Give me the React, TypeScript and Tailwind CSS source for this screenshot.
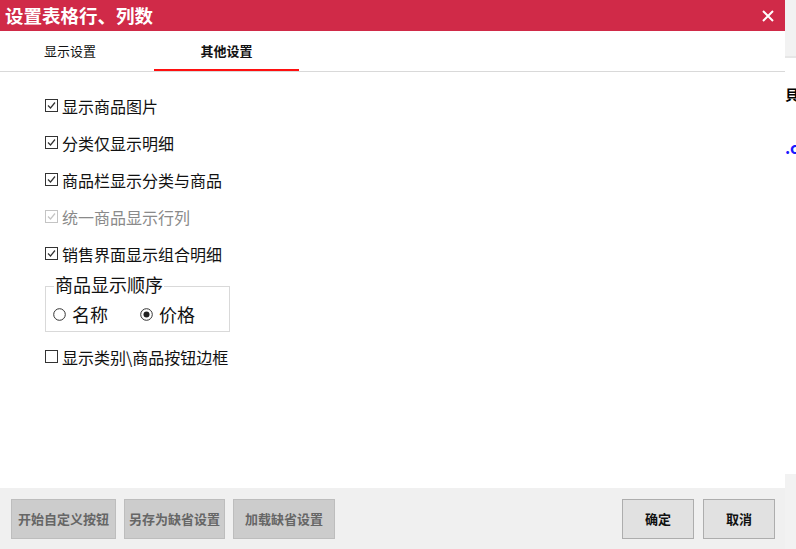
import React from "react"

const font = { fontFamily: '"Noto Sans CJK SC", "Noto Sans", sans-serif' }

const checks = [
  { label: "显示商品图片", checked: true },
  { label: "分类仅显示明细", checked: true },
  { label: "商品栏显示分类与商品", checked: true },
  { label: "统一商品显示行列", checked: true, disabled: true },
  { label: "销售界面显示组合明细", checked: true },
]

function Box({ checked, disabled }: { checked: boolean; disabled?: boolean }) {
  const c = disabled ? "#c4c4c4" : "#333333"
  return (
    <svg width="13" height="13" viewBox="0 0 13 13" className="shrink-0">
      <rect x="0.5" y="0.5" width="12" height="12" fill="white" stroke={c} />
      {checked && <path d="M3 6.5 L5.5 9 L10 3.5" fill="none" stroke={c} strokeWidth="1.2" />}
    </svg>
  )
}

function CheckRow({ label, checked, disabled }: { label: string; checked: boolean; disabled?: boolean }) {
  return (
    <div className="flex h-[37px] items-center gap-[4px]">
      <Box checked={checked} disabled={disabled} />
      <span className={`text-[16px] leading-none ${disabled ? "text-[#8a8a8a]" : "text-[#111]"}`}>{label}</span>
    </div>
  )
}

function Radio({ label, on }: { label: string; on?: boolean }) {
  return (
    <div className="flex items-center gap-[6px]">
      <svg width="13" height="13" viewBox="0 0 13 13">
        <circle cx="6.5" cy="6.5" r="5.8" fill="white" stroke="#333" />
        {on && <circle cx="6.5" cy="6.5" r="3" fill="#222" />}
      </svg>
      <span className="text-[18px] leading-none text-[#111]">{label}</span>
    </div>
  )
}

function Btn({ children, primary, w }: { children: React.ReactNode; primary?: boolean; w?: string }) {
  return primary ? (
    <button className="flex h-[40px] w-[72px] items-center justify-center border border-[#adadad] bg-[#e1e1e1] text-[13px] font-bold text-[#111]">
      {children}
    </button>
  ) : (
    <button className={`flex h-[40px] items-center justify-center border border-[#bdbdbd] bg-[#cccccc] text-[13px] font-bold text-[#666] ${w}`}>
      {children}
    </button>
  )
}

export default function App() {
  return (
    <div className="flex h-[549px] w-[796px] overflow-hidden bg-white" style={font}>
      <div className="flex h-full w-[785px] flex-col">
        <div className="flex h-[31px] items-center justify-between bg-[#d02a48] pl-[5px] pr-[10px]">
          <span className="text-[18.5px] font-bold text-white">设置表格行、列数</span>
          <svg width="14" height="14" viewBox="0 0 14 14">
            <path d="M2 2 L12 12 M12 2 L2 12" stroke="white" strokeWidth="2" />
          </svg>
        </div>
        <div className="flex h-[41px] border-b border-[#d9d9d9]">
          <div className="flex w-[140px] items-center justify-center text-[13px] text-[#111]">显示设置</div>
          <div className="ml-[14px] flex w-[145px] items-center justify-center border-b-2 border-[#ff1010] pt-[2px] text-[13px] font-bold text-[#111]">
            其他设置
          </div>
        </div>
        <div className="flex flex-1 flex-col pl-[45px] pt-[15px]">
          {checks.map((c) => (
            <CheckRow key={c.label} {...c} />
          ))}
          <div className="relative mt-[14px] h-[46px] w-[185px] border border-[#d9d9d9]">
            <span className="absolute left-[8px] top-[-12px] bg-white px-[1px] text-[18px] leading-none text-[#111]">
              商品显示顺序
            </span>
            <div className="flex h-full items-center gap-[32px] pl-[7px] pt-[10px]">
              <Radio label="名称" />
              <Radio label="价格" on />
            </div>
          </div>
          <div className="mt-[6px]">
            <CheckRow label="显示类别\商品按钮边框" checked={false} />
          </div>
        </div>
        <div className="flex h-[61px] items-center bg-[#f0f0f0] pl-[11px] pr-[10px]">
          <div className="flex gap-[8px]">
            <Btn w="w-[105px]">开始自定义按钮</Btn>
            <Btn w="w-[101px]">另存为缺省设置</Btn>
            <Btn w="w-[102px]">加载缺省设置</Btn>
          </div>
          <div className="ml-auto flex gap-[9px]">
            <Btn primary>确定</Btn>
            <Btn primary>取消</Btn>
          </div>
        </div>
      </div>
      <div className="flex w-[11px] flex-col bg-white">
        <div className="h-[58px] border-b-2 border-[#e6e6e6] bg-[#f2f2f2]" />
        <div className="mt-[26px] overflow-hidden whitespace-nowrap text-[14px] font-bold text-black">貝</div>
        <div className="mt-[30px] overflow-hidden whitespace-nowrap text-[16px] font-bold text-[#1a1aff]">.c</div>
        <div className="mt-auto h-[75px] bg-[#f2f2f2]" />
      </div>
    </div>
  )
}
